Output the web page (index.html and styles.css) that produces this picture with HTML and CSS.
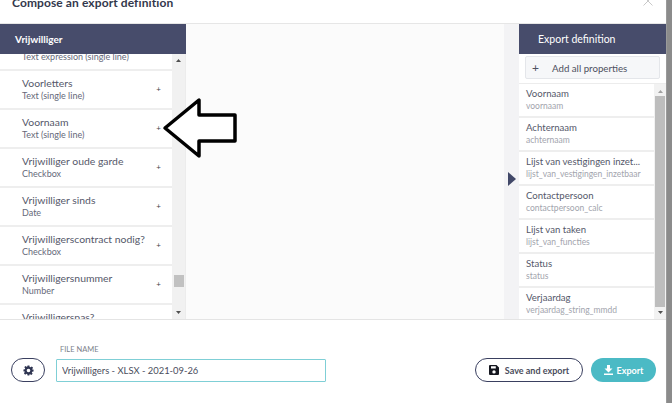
FILE: index.html
```html
<!DOCTYPE html>
<html lang="en">
<head>
<meta charset="utf-8">
<title>Compose an export definition</title>
<link rel="stylesheet" href="styles.css">
</head>
<body>
<div class="modal">
  <header class="modal-head">
    <h1 class="title">Compose an export definition</h1>
    <svg class="close" width="10" height="6" viewBox="0 0 10 6"><path d="M0.5 -3.5 L9.5 5.5 M9.5 -3.5 L0.5 5.5" fill="none" stroke="#c9c9c9" stroke-width="1"/></svg>
  </header>
  <main class="columns">
    <section class="left">
      <div class="panel-head left-head">Vrijwilliger</div>
      <div class="left-body">
        <div class="list">
          <div class="list-inner">
            <div class="prop"><div><div class="name">Volledige naam</div><div class="type">Text expression (single line)</div></div><span class="plus">+</span></div>
            <div class="prop"><div><div class="name">Voorletters</div><div class="type">Text (single line)</div></div><span class="plus">+</span></div>
            <div class="prop"><div><div class="name">Voornaam</div><div class="type">Text (single line)</div></div><span class="plus">+</span></div>
            <div class="prop"><div><div class="name">Vrijwilliger oude garde</div><div class="type">Checkbox</div></div><span class="plus">+</span></div>
            <div class="prop"><div><div class="name">Vrijwilliger sinds</div><div class="type">Date</div></div><span class="plus">+</span></div>
            <div class="prop"><div><div class="name">Vrijwilligerscontract nodig?</div><div class="type">Checkbox</div></div><span class="plus">+</span></div>
            <div class="prop"><div><div class="name">Vrijwilligersnummer</div><div class="type">Number</div></div><span class="plus">+</span></div>
            <div class="prop"><div><div class="name">Vrijwilligerspas?</div><div class="type">Checkbox</div></div><span class="plus">+</span></div>
          </div>
        </div>
        <div class="scrollbar left-bar">
          <svg class="sb-arrow" width="5" height="3" viewBox="0 0 5 3"><path d="M2.5 0 L5 3 L0 3 Z" fill="#505050"/></svg>
          <div class="track left-track"><div class="thumb left-thumb"></div></div>
          <svg class="sb-arrow" width="5" height="3" viewBox="0 0 5 3"><path d="M0 0 L5 0 L2.5 3 Z" fill="#505050"/></svg>
        </div>
      </div>
    </section>
    <section class="middle"></section>
    <section class="gutter">
      <svg class="gutter-arrow" width="8" height="14" viewBox="0 0 8 14"><path d="M0 0 L8 7 L0 14 Z" fill="#414868"/></svg>
    </section>
    <section class="right">
      <div class="panel-head right-head">Export definition</div>
      <div class="add-wrap"><div class="add"><span class="add-plus">+</span><span>Add all properties</span></div></div>
      <div class="right-body">
        <div class="list right-list">
          <div class="def"><div class="name">Voornaam</div><div class="key">voornaam</div></div>
          <div class="def"><div class="name">Achternaam</div><div class="key">achternaam</div></div>
          <div class="def"><div class="name">Lijst van vestigingen inzet...</div><div class="key">lijst_van_vestigingen_inzetbaar</div></div>
          <div class="def"><div class="name">Contactpersoon</div><div class="key">contactpersoon_calc</div></div>
          <div class="def"><div class="name">Lijst van taken</div><div class="key">lijst_van_functies</div></div>
          <div class="def"><div class="name">Status</div><div class="key">status</div></div>
          <div class="def"><div class="name">Verjaardag</div><div class="key">verjaardag_string_mmdd</div></div>
        </div>
        <div class="scrollbar right-bar">
          <svg class="sb-arrow" width="5" height="3" viewBox="0 0 5 3"><path d="M2.5 0 L5 3 L0 3 Z" fill="#a0a0a0"/></svg>
          <div class="track right-track"><div class="thumb right-thumb"></div></div>
          <svg class="sb-arrow" width="5" height="3" viewBox="0 0 5 3"><path d="M0 0 L5 0 L2.5 3 Z" fill="#505050"/></svg>
        </div>
      </div>
    </section>
  </main>
  <footer class="foot">
    <button class="btn gear-btn" type="button">
      <svg width="11" height="11" viewBox="0 0 24 24"><path fill="#2f3552" fill-rule="evenodd" d="M10 1h4l.6 3.2 1.900.8 2.700-1.800 2.800 2.800-1.800 2.700.8 1.900L23 10v4l-3 .6-.8 1.900 1.800 2.700-2.800 2.800-2.700-1.800-1.900.8L14 23h-4l-.6-3-1.900-.8-2.700 1.800L2 18.200l1.800-2.700L3 13.600 1 14v-4l3-.6.8-1.900L3 4.800 4.800 2l2.700 1.800L9.400 3zM12 8a4 4 0 1 0 0 8 4 4 0 0 0 0-8z"/></svg>
    </button>
    <div class="field">
      <label class="field-label" for="fname">FILE NAME</label>
      <input id="fname" class="field-input" type="text" value="Vrijwilligers - XLSX - 2021-09-26" autofocus>
    </div>
    <button class="btn save-btn" type="button">
      <svg width="10" height="10" viewBox="0 0 10 10"><path fill="#15171f" fill-rule="evenodd" d="M1 0h6.500L10 2.500V9a1 1 0 0 1-1 1H1a1 1 0 0 1-1-1V1a1 1 0 0 1 1-1zM2 1.200V3.600h4.800V1.200zM5 5.200a1.700 1.700 0 1 0 0 3.400 1.700 1.700 0 0 0 0-3.400z"/></svg>
      <span>Save and export</span>
    </button>
    <button class="btn export-btn" type="button">
      <svg width="9" height="10" viewBox="0 0 9 10"><path fill="#fff" d="M3 0h3v3.500h2.500L4.500 7.500 .5 3.500H3zM0 8.600h9V10H0z"/></svg>
      <span>Export</span>
    </button>
  </footer>
  <aside class="edge"></aside>
</div>
<svg class="callout" width="78" height="64" viewBox="0 0 78 64"><path d="M3 31 L37 3 L37 18 L73 18 L73 44 L37 44 L37 59 Z" fill="#fff" stroke="#000" stroke-width="3.500" stroke-linejoin="round"/></svg>
</body>
</html>
```

FILE: styles.css
```css
* { box-sizing: border-box; }
html, body { margin: 0; padding: 0; width: 672px; height: 403px; overflow: hidden; background: #fff; }
body { font-family: Lato, "Open Sans", sans-serif; color: #4a4d5c; position: relative; }

.modal { width: 672px; height: 403px; display: flex; flex-direction: column; position: relative; padding-right: 6px; }
.edge { position: absolute; top: 0; right: 0; bottom: 0; width: 6px; background: #8b8b8b; border-left: 1px solid #9a9a9a; }

.modal-head { height: 24px; flex: none; display: flex; justify-content: space-between; align-items: flex-start; padding: 0 13px 0 12px; border-bottom: 1px solid #e6e6e6; overflow: hidden; }
.title { margin: -5px 0 0; font-size: 12px; line-height: 16px; font-weight: 700; color: #33384c; letter-spacing: .1px; height: 19px; overflow: visible; }
.close { display: block; margin-top: 0; }

.columns { height: 296px; flex: none; display: flex; border-bottom: 1px solid #e4e4e4; }
.left { width: 186px; flex: none; display: flex; flex-direction: column; }
.middle { flex: 1; background: #fbfbfb; }
.gutter { width: 15px; flex: none; background: #f3f3f5; display: flex; flex-direction: column; justify-content: flex-end; padding-bottom: 133px; padding-left: 4px; }
.gutter-arrow { display: block; }
.right { width: 147px; flex: none; display: flex; flex-direction: column; background: #f3f3f5; }

.panel-head { height: 30px; flex: none; background: #474c6b; color: #fff; font-size: 10px; font-weight: 700; line-height: 30px; }
.left-head { padding-left: 15px; }
.right-head { padding-left: 19px; font-size: 10.500px; font-weight: 400; }

.left-body { flex: 1; min-height: 0; display: flex; background: #f0f0f0; border-right: 1px solid #ececec; }
.list { flex: 1; min-width: 0; overflow: hidden; }
.list-inner { margin-top: -22px; }
.prop { height: 39px; background: #fff; border-bottom: 2px solid #eeeeee; display: flex; justify-content: space-between; align-items: center; padding: 0 11px 1px 22px; }
.name { font-size: 10.400px; line-height: 13px; color: #55586a; white-space: nowrap; }
.type { font-size: 9px; line-height: 11px; color: #66697a; white-space: nowrap; }
.plus { font-size: 8px; line-height: 10px; color: #444; font-weight: 400; }

.scrollbar { flex: none; display: flex; flex-direction: column; align-items: center; background: #f1f1f1; }
.left-bar { width: 13px; padding: 5px 0 5px; }
.right-bar { width: 12px; padding: 6px 0 5px; background: #f2f2f2; }
.sb-arrow { flex: none; display: block; }
.track { flex: 1; width: 100%; display: flex; flex-direction: column; }
.left-track { padding-top: 213px; padding-left: 2px; padding-right: 1px; }
.left-thumb { height: 12px; background: #c1c1c1; }
.right-track { padding: 3px 1px 4px; }
.right-thumb { flex: 1; background: #bdbdbd; }

.add-wrap { height: 30px; flex: none; background: #fff; padding: 2px 6px 4px; border-bottom: 1px solid #ececec; }
.add { height: 23px; background: #f6f7f9; border: 1px solid #e4e6ea; border-radius: 2px; display: flex; align-items: center; font-size: 9.700px; color: #4d5060; padding-left: 6px; }
.add-plus { width: 20px; font-size: 12px; }
.right-body { flex: 1; min-height: 0; display: flex; background: #f2f2f2; }
.right-list { background: #f2f2f2; }
.def { height: 34px; background: #fff; padding: 3px 0 0 7px; border-bottom: 2px solid #eeeeee; }
.def .name { font-size: 9.600px; }
.key { font-size: 8.500px; line-height: 13px; color: #a2a4ad; white-space: nowrap; }

.foot { flex: 1; display: flex; align-items: flex-start; padding: 25px 11px 0 11px; position: relative; }
.btn { font-family: inherit; border-radius: 12px; height: 24px; display: flex; align-items: center; justify-content: center; padding: 0; flex: none; cursor: pointer; }
.gear-btn { width: 34px; margin-top: 13px; background: #fff; border: 1.500px solid #3a4060; }
.field { width: 270px; margin-left: 11px; flex: none; }
.field-label { display: block; font-size: 7.500px; line-height: 10px; color: #7d7f8a; margin: 0 0 4px 4px; }
.field-input { display: block; width: 100%; height: 23px; border: 1px solid #7fcfd6; padding: 0 0 0 5px; font-family: inherit; font-size: 9.400px; color: #4a4d5c; background: #fff; border-radius: 1px; outline: none; caret-color: #222; }
.save-btn { width: 108px; margin-left: 149px; margin-top: 13px; background: #fff; border: 1.500px solid #3a4060; gap: 6px; font-size: 9px; font-weight: 700; color: #4a4d5c; }
.export-btn { width: 65px; margin-left: 8px; margin-top: 13px; background: #4bbac5; border: none; gap: 4px; color: #fff; font-size: 9px; font-weight: 700; }

.callout { position: absolute; left: 162px; top: 97px; display: block; }
```
